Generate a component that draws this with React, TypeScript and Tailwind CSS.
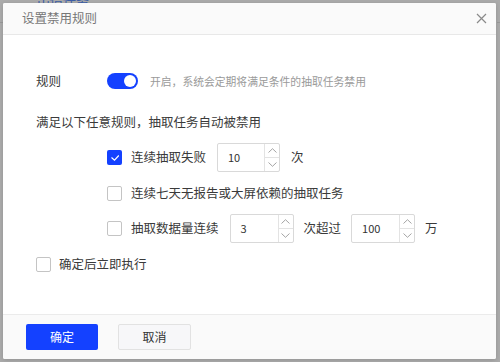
import { useState } from "react";

const FONT = { fontFamily: '"Noto Sans CJK SC", "Noto Sans", sans-serif' };

function Checkbox({ checked }: { checked?: boolean }) {
  if (checked) {
    return (
      <span className="w-[15px] h-[15px] rounded-[2px] bg-[#1441ff] flex items-center justify-center shrink-0">
        <svg width="10" height="8" viewBox="0 0 10 8" fill="none">
          <path d="M1.5 3.5 L4.5 6.2 L8.8 1.5" stroke="white" strokeWidth="1.2" />
        </svg>
      </span>
    );
  }
  return <span className="w-[15px] h-[15px] rounded-[2px] border border-[#c4c4c4] bg-white shrink-0" />;
}

function NumberInput({ value, width }: { value: string; width: string }) {
  return (
    <div className={`${width} h-[29px] border border-[#d9d9d9] rounded-[2px] flex bg-white shrink-0`}>
      <div className="flex-1 flex items-center pl-[10px] text-[11px] text-[#333]">{value}</div>
      <div className="w-[15px] border-l border-[#e3e3e3] flex flex-col">
        <div className="flex-1 flex items-center justify-center border-b border-[#e3e3e3]">
          <svg width="9" height="5" viewBox="0 0 9 5" fill="none">
            <path d="M0.5 4.5 L4.5 0.7 L8.5 4.5" stroke="#9a9a9a" strokeWidth="0.9" />
          </svg>
        </div>
        <div className="flex-1 flex items-center justify-center">
          <svg width="9" height="5" viewBox="0 0 9 5" fill="none">
            <path d="M0.5 0.5 L4.5 4.3 L8.5 0.5" stroke="#9a9a9a" strokeWidth="0.9" />
          </svg>
        </div>
      </div>
    </div>
  );
}

export default function App() {
  const [enabled] = useState(true);

  return (
    <div className="relative w-[500px] h-[362px] overflow-hidden bg-[#ababab]" style={FONT}>
      {/* page underneath the mask */}
      <div className="absolute left-[37px] top-[-10px] text-[13px] text-[#3d5fa8]">出借任务</div>
      <div className="absolute left-0 top-[22px] w-[3px] h-px bg-[#999]" />
      <div className="absolute right-0 top-[22px] w-[3px] h-px bg-[#999]" />

      <div className="absolute left-[3px] top-[3px] w-[493px] h-[356px] bg-white rounded-[2px] shadow-[0_1px_4px_rgba(0,0,0,0.15)] flex flex-col overflow-hidden">
        <div className="h-[32px] bg-[#fafafa] border-b border-[#e8e8e8] flex items-center justify-between pl-[19px] pr-[9px] shrink-0">
          <span className="text-[12.5px] text-[#777]">设置禁用规则</span>
          <svg width="11" height="11" viewBox="0 0 11 11" fill="none">
            <path d="M1 1 L10 10 M10 1 L1 10" stroke="#8a8a8a" strokeWidth="1.2" />
          </svg>
        </div>

        <div className="flex-1 flex flex-col pl-[33px] text-[12.5px] text-[#3a3a3a]">
          <div className="mt-[38px] h-[16px] flex items-center">
            <span className="w-[71px]">规则</span>
            <span className={`w-[31px] h-[16px] rounded-full flex items-center px-[2px] ${enabled ? "bg-[#1441ff] justify-end" : "bg-[#ccc]"}`}>
              <span className="w-[12px] h-[12px] rounded-full bg-white" />
            </span>
            <span className="ml-[12px] text-[10.8px] text-[#9a9a9a]">开启，系统会定期将满足条件的抽取任务禁用</span>
          </div>

          <div className="mt-[24px] h-[18px] flex items-center">满足以下任意规则，抽取任务自动被禁用</div>

          <div className="mt-[12px] pl-[71px] flex flex-col">
            <div className="h-[29px] flex items-center">
              <Checkbox checked />
              <span className="ml-[9px]">连续抽取失败</span>
              <span className="ml-[11px]"><NumberInput value="10" width="w-[63px]" /></span>
              <span className="ml-[11px]">次</span>
            </div>
            <div className="mt-[12px] h-[18px] flex items-center">
              <Checkbox />
              <span className="ml-[9px]">连续七天无报告或大屏依赖的抽取任务</span>
            </div>
            <div className="mt-[12px] h-[29px] flex items-center">
              <Checkbox />
              <span className="ml-[9px]">抽取数据量连续</span>
              <span className="ml-[11px]"><NumberInput value="3" width="w-[64px]" /></span>
              <span className="ml-[10px]">次超过</span>
              <span className="ml-[10px]"><NumberInput value="100" width="w-[64px]" /></span>
              <span className="ml-[10px]">万</span>
            </div>
          </div>

          <div className="mt-[12px] h-[18px] flex items-center">
            <Checkbox />
            <span className="ml-[8px]">确定后立即执行</span>
          </div>
        </div>

        <div className="h-[45px] bg-[#fafafa] border-t border-[#ebebeb] flex items-center pl-[23px] gap-[20px] shrink-0">
          <button className="w-[72px] h-[26px] rounded-[2px] bg-[#1441ff] text-white text-[12px]">确定</button>
          <button className="w-[73px] h-[26px] rounded-[2px] bg-[#f7f7f9] border border-[#e2e2e2] text-[#333] text-[12px]">取消</button>
        </div>
      </div>
    </div>
  );
}
